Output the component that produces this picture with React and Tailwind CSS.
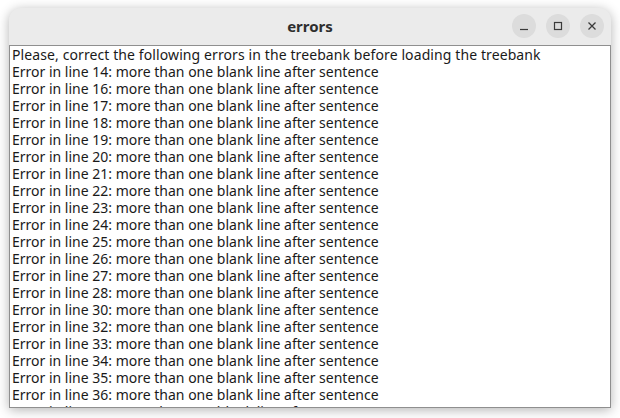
import React from 'react';

const lines = [14, 16, 17, 18, 19, 20, 21, 22, 23, 24, 25, 26, 27, 28, 30, 32, 33, 34, 35, 36, 37];

const font = { fontFamily: '"Noto Sans", "DejaVu Sans", sans-serif' };

const WinButton = ({ children }) => (
  <div className="w-[24px] h-[24px] rounded-full bg-[#dcdcdc] flex items-center justify-center text-[#3a3a3a]">
    {children}
  </div>
);

export default function App() {
  return (
    <div className="w-[620px] h-[418px] bg-white overflow-hidden pt-[8px] pl-[9px]" style={font}>
      <div className="w-[602px] h-[400px] flex flex-col rounded-t-[12px] bg-[#ebebeb] shadow-[0_2px_12px_rgba(0,0,0,0.3)]">
        <div className="h-[37px] relative flex items-center justify-center shrink-0">
          <span className="text-[15px] font-bold text-[#2e2e2e]">errors</span>
          <div className="absolute right-[7px] top-[6px] flex gap-[10px]">
            <WinButton>
              <svg width="10" height="10" viewBox="0 0 10 10"><path d="M1 8.5h8" stroke="currentColor" strokeWidth="1.2" /></svg>
            </WinButton>
            <WinButton>
              <svg width="10" height="10" viewBox="0 0 10 10"><rect x="1.5" y="1.5" width="7" height="7" fill="none" stroke="currentColor" strokeWidth="1.2" /></svg>
            </WinButton>
            <WinButton>
              <svg width="10" height="10" viewBox="0 0 10 10"><path d="M1.5 1.5l7 7M8.5 1.5l-7 7" stroke="currentColor" strokeWidth="1.3" /></svg>
            </WinButton>
          </div>
        </div>
        <div className="flex-1 bg-white border border-[#8f8f8f] overflow-hidden pl-[2px] text-[14px] leading-[17px] text-[#1a1a1a]">
          <div className="tracking-[0.1px]">Please, correct the following errors in the treebank before loading the treebank</div>
          {lines.map((n) => (
            <div key={n}>Error in line {n}: more than one blank line after sentence</div>
          ))}
        </div>
      </div>
    </div>
  );
}
